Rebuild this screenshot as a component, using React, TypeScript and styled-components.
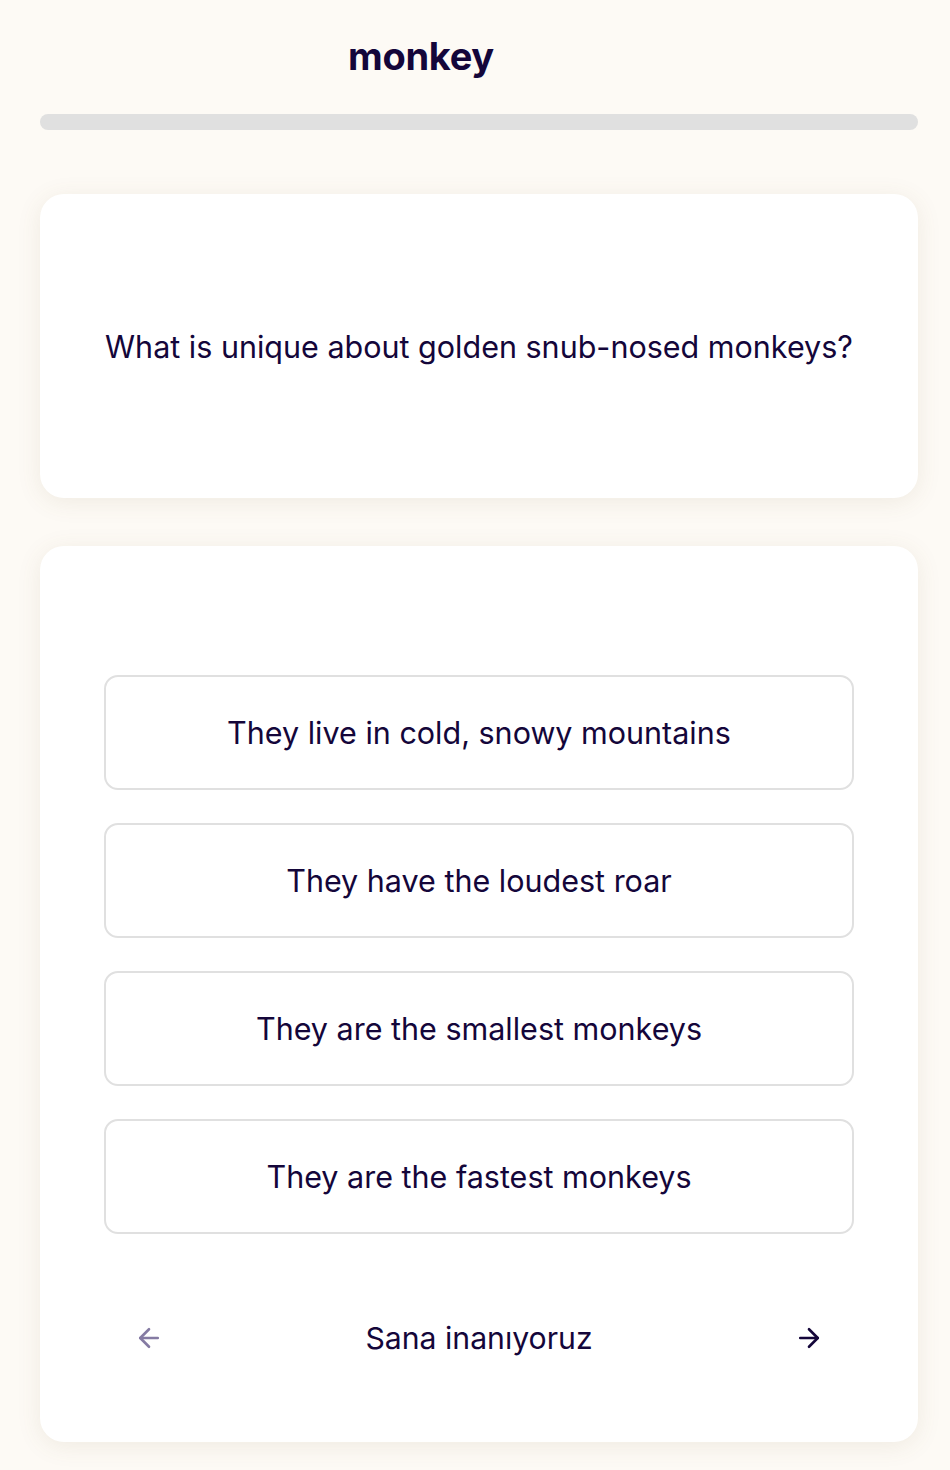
import React from 'react';
import styled, { createGlobalStyle } from 'styled-components';

const GlobalStyle = createGlobalStyle`
  html, body {
    margin: 0;
    padding: 0;
    background: #fdfaf5;
    font-family: Inter, "Noto Sans", sans-serif;
    color: #14063a;
  }
`;

const Page = styled.div`
  width: 950px;
  min-height: 1470px;
  box-sizing: border-box;
  padding: 24px 32px 0 40px;
`;

const Header = styled.header`
  display: flex;
  justify-content: center;
  padding-right: 116px;
  height: 64px;
  align-items: center;
`;

const Title = styled.h1`
  margin: 0;
  font-size: 38px;
  font-weight: 700;
  letter-spacing: -0.3px;
`;

const Progress = styled.div`
  margin-top: 26px;
  height: 16px;
  border-radius: 8px;
  background: #e0e0e0;
`;

const Card = styled.section<{ $height: number }>`
  box-sizing: border-box;
  background: #fff;
  border-radius: 24px;
  box-shadow: 0 4px 24px rgba(120, 100, 60, 0.1);
  height: ${(p) => p.$height}px;
  padding: 0 64px;
`;

const QuestionCard = styled(Card)`
  margin-top: 64px;
  display: flex;
  align-items: center;
  justify-content: center;
`;

const Question = styled.p`
  margin: 0;
  font-size: 30.5px;
  text-align: center;
  white-space: nowrap;
`;

const AnswerCard = styled(Card)`
  margin-top: 48px;
  padding-top: 129px;
  display: flex;
  flex-direction: column;
`;

const Options = styled.div`
  display: flex;
  flex-direction: column;
  gap: 33px;
`;

const Option = styled.button`
  height: 115px;
  border: 2px solid #e0e0e0;
  border-radius: 14px;
  background: #fff;
  font-family: inherit;
  font-size: 30.5px;
  color: #14063a;
  cursor: pointer;
`;

const Nav = styled.div`
  margin-top: 72px;
  display: flex;
  align-items: center;
  justify-content: space-between;
  padding: 0 30px;
  height: 64px;
`;

const NavButton = styled.button<{ $muted?: boolean }>`
  border: 0;
  background: none;
  padding: 0;
  width: 30px;
  height: 30px;
  display: flex;
  align-items: center;
  justify-content: center;
  color: ${(p) => (p.$muted ? '#857ba3' : '#14063a')};
  cursor: pointer;
`;

const NavLabel = styled.span`
  font-size: 30.2px;
`;

const Arrow = ({ dir }: { dir: 'left' | 'right' }) => (
  <svg width="30" height="30" viewBox="0 0 24 24" fill="none" stroke="currentColor" strokeWidth="2.1" strokeLinecap="round" strokeLinejoin="round">
    {dir === 'left' ? (
      <>
        <path d="M19 12H5" />
        <path d="M12 19l-7-7 7-7" />
      </>
    ) : (
      <>
        <path d="M5 12h14" />
        <path d="M12 5l7 7-7 7" />
      </>
    )}
  </svg>
);

const answers = [
  'They live in cold, snowy mountains',
  'They have the loudest roar',
  'They are the smallest monkeys',
  'They are the fastest monkeys',
];

export default function App() {
  return (
    <>
      <GlobalStyle />
      <Page>
        <Header>
          <Title>monkey</Title>
        </Header>
        <Progress />
        <QuestionCard $height={304}>
          <Question>What is unique about golden snub-nosed monkeys?</Question>
        </QuestionCard>
        <AnswerCard $height={896}>
          <Options>
            {answers.map((a) => (
              <Option key={a}>{a}</Option>
            ))}
          </Options>
          <Nav>
            <NavButton $muted aria-label="previous">
              <Arrow dir="left" />
            </NavButton>
            <NavLabel>Sana inanıyoruz</NavLabel>
            <NavButton aria-label="next">
              <Arrow dir="right" />
            </NavButton>
          </Nav>
        </AnswerCard>
      </Page>
    </>
  );
}
